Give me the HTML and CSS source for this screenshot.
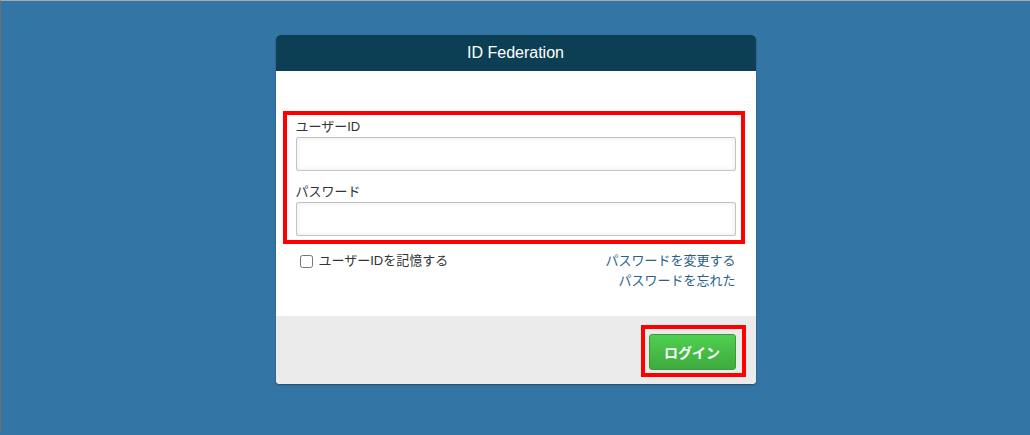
FILE: index.html
```html
<!DOCTYPE html>
<html lang="ja">
<head>
    <meta charset="UTF-8">
    <meta name="viewport" content="width=device-width, initial-scale=1.0">
    <title>ID Federation</title>

    <link rel="stylesheet" href="styles.css">
</head>
<body>
    <div class="login-card">
        <div class="card-header">ID Federation</div>

        <form class="card-body">
            <div class="highlight fields">
                <div class="form-group">
                    <label for="user-id">ユーザーID</label>
                    <input type="text" id="user-id" class="form-control" autofocus>
                </div>
                <div class="form-group">
                    <label for="password">パスワード</label>
                    <input type="password" id="password" class="form-control">
                </div>
            </div>

            <div class="options">
                <label class="remember"><input type="checkbox" class="remember-check">ユーザーIDを記憶する</label>
                <div class="links">
                    <a href="#">パスワードを変更する</a>
                    <a href="#">パスワードを忘れた</a>
                </div>
            </div>
        </form>

        <div class="card-footer">
            <span class="highlight button-box">
                <button type="submit" class="login-button">ログイン</button>
            </span>
        </div>
    </div>
</body>
</html>
```

FILE: styles.css
```css
html {
    background-color: #3375a5;
}

body {
    margin: 0;
    min-height: 434px;
    padding-top: 34px;
    box-sizing: border-box;

    font-family: 'Liberation Sans', 'Noto Sans CJK JP', sans-serif;
    font-size: 13px;
    color: #333;

    background-color: #3375a5;
    border-top: 1px solid #a9a9a9;
    border-left: 1px solid #6e6e6e;
}

.login-card {
    width: 480px;
    margin: 0 auto;

    background-color: #fff;
    border-radius: 4px;
    box-shadow: 0 1px 2px rgba(0, 0, 0, 0.35);
}

.card-header {
    height: 36px;
    line-height: 36px;

    background-color: #0d3f54;
    color: #fff;
    font-size: 16px;
    text-align: center;

    border-radius: 4px 4px 0 0;
}

.card-body {
    margin: 0;
    padding: 40px 20px 25px;
}

.highlight {
    border: 4px solid #ff0000;
}

.fields {
    margin: 0 -9px 0 -13px;
    padding: 2px 5px 4px 9px;
}

.form-group label {
    display: block;
    line-height: 20px;
}

.form-group + .form-group {
    margin-top: 11px;
}

.form-control {
    display: block;
    width: 100%;
    height: 34px;
    box-sizing: border-box;
    margin: 0;
    padding: 6px 8px;

    font-family: inherit;
    font-size: 14px;
    color: #333;
    caret-color: #1d5a7a;

    border: 1px solid #c4c4c4;
    border-radius: 2px;
    box-shadow: inset 0 0 4px rgba(0, 0, 0, 0.1);
}

.form-control:focus {
    outline: none;
}

.options {
    margin-top: 7px;

    display: flex;
    justify-content: space-between;
    align-items: flex-start;
}

.remember {
    display: flex;
    align-items: center;
    line-height: 20px;
}

.remember-check {
    width: 13px;
    height: 13px;
    margin: 0 6px 0 4px;
}

.links {
    display: flex;
    flex-direction: column;
    align-items: flex-end;
    line-height: 20px;
}

.links a {
    color: #2a6188;
    text-decoration: none;
}

.card-footer {
    padding: 9px 10px 7px;

    display: flex;
    justify-content: flex-end;

    background-color: #ebebeb;
    border-radius: 0 0 4px 4px;
}

.button-box {
    display: block;
    padding: 5px 6px 3px 4px;
}

.login-button {
    display: block;
    width: 87px;
    height: 36px;

    font-family: inherit;
    font-size: 14px;
    font-weight: bold;
    color: #fff;

    background: linear-gradient(#4fcf4f, #3eab3e);
    border: 1px solid #3a9a3a;
    border-radius: 3px;

    cursor: pointer;
}
```
